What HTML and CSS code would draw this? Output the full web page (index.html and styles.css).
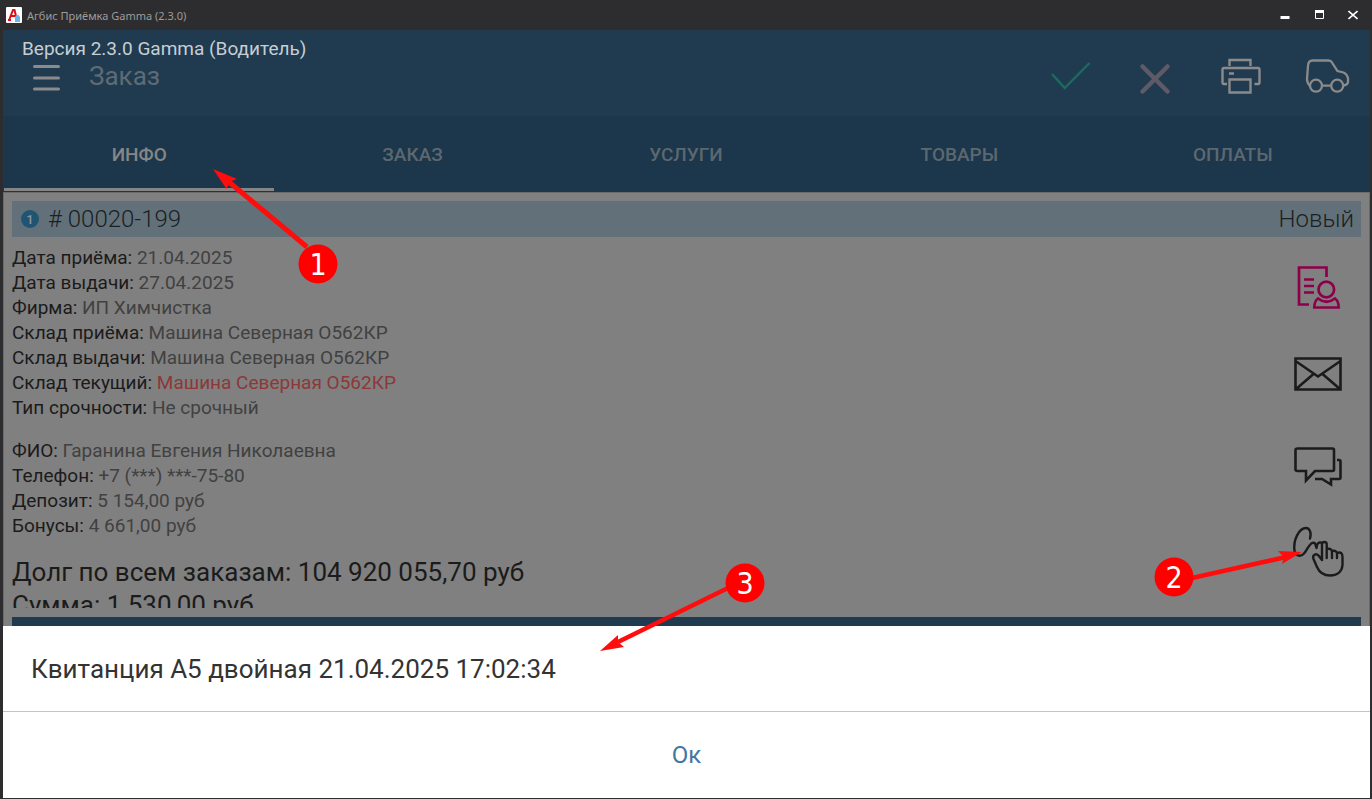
FILE: index.html
```html
<!DOCTYPE html>
<html lang="ru">
<head>
<meta charset="utf-8">
<title>Агбис Приёмка Gamma (2.3.0)</title>
<link rel="stylesheet" href="styles.css">
</head>
<body>
<div class="window">
  <div class="titlebar">
    <svg class="app-icon" width="16" height="16" viewBox="0 0 16 16" aria-hidden="true">
      <rect width="16" height="16" rx="1" fill="#fff"/>
      <path d="M2 13h3M9 13h2M3.500 12L7 3h1.500l2 8M5 9h5" fill="none" stroke="#e00b12" stroke-width="2"/>
      <path d="M9 15V10l1.500-2h2L14 10v5z" fill="#6bb5ef"/>
    </svg>
    <span class="app-name">Агбис Приёмка Gamma (2.3.0)</span>
    <div class="window-controls">
      <button class="window-button" type="button" aria-label="Свернуть"><svg width="10" height="10" viewBox="0 0 10 10"><path d="M0.500 7.500h9" stroke="#fff" stroke-width="3"/></svg></button>
      <button class="window-button" type="button" aria-label="Развернуть"><svg width="10" height="10" viewBox="0 0 10 10"><path d="M1.500 1v7.500h8V1" fill="none" stroke="#fff"/><path d="M1 1.500h9" stroke="#fff" stroke-width="3"/></svg></button>
      <button class="window-button" type="button" aria-label="Закрыть"><svg width="10" height="10" viewBox="0 0 10 10"><path d="M.5 1l9 8M9.500 1l-9 8" stroke="#fff" stroke-width="1.600"/></svg></button>
    </div>
  </div>

  <header class="header">
    <p class="version">Версия 2.3.0 Gamma (Водитель)</p>
    <div class="toolbar">
      <button class="menu-button" type="button" aria-label="Меню"><svg width="28" height="28" viewBox="0 0 28 28"><path d="M2.500 2.500h24M2.500 14h24M2.500 25h24" stroke="#8b8b8b" stroke-width="3" stroke-linecap="round"/></svg></button>
      <h1 class="page-title">Заказ</h1>
      <button class="tool-button" type="button" aria-label="Сохранить"><svg width="48" height="40" viewBox="0 0 48 40"><path d="M7 16l12.700 14L44.500 5" stroke="#1d6a5e" stroke-width="2.400"/></svg></button>
      <button class="tool-button" type="button" aria-label="Отменить"><svg width="48" height="40" viewBox="0 0 48 40"><path d="M11.500 8.500l25 25M36.500 8.500l-25 25" stroke="#5f5a67" stroke-width="4.500" stroke-linecap="round"/></svg></button>
      <button class="tool-button" type="button" aria-label="Печать"><svg width="48" height="40" viewBox="0 0 48 40"><path d="M12.500 8V2h21v6M10 26H7q-1.500 0-1.500-1.500v-13Q5.500 10 7 10h34q1.500 0 1.500 1.500v13Q42.500 26 41 26h-3.500M12.500 21.500h21v13h-21zM12 15.500h5" stroke="#8b8b8b" stroke-width="2.400"/></svg></button>
      <button class="tool-button" type="button" aria-label="Доставка"><svg width="48" height="40" viewBox="0 0 48 40"><g stroke="#8b8b8b" stroke-width="2.300"><circle cx="13" cy="27.700" r="6"/><circle cx="34.200" cy="27.700" r="6"/><path d="M7 28q-3-3-3-7L5 8Q5.200 2.500 9.500 2.500H25.500Q28 2.500 29 4.500L34.500 13 40.500 14.500Q44 16 45 20V24Q44.500 27 40.200 27.700M19 27.700h9.200"/></g></svg></button>
    </div>
  </header>

  <nav class="tabs">
    <button class="tab tab-active" type="button">ИНФО</button>
    <button class="tab" type="button">ЗАКАЗ</button>
    <button class="tab" type="button">УСЛУГИ</button>
    <button class="tab" type="button">ТОВАРЫ</button>
    <button class="tab" type="button">ОПЛАТЫ</button>
  </nav>

  <main class="content">
    <div class="order-bar">
      <span class="order-count">1</span>
      <span class="order-number"># 00020-199</span>
      <span class="order-status">Новый</span>
    </div>
    <div class="details">
      <div class="info">
        <section class="group">
          <p>Дата приёма: <span class="value">21.04.2025</span></p>
          <p>Дата выдачи: <span class="value">27.04.2025</span></p>
          <p>Фирма: <span class="value">ИП Химчистка</span></p>
          <p>Склад приёма: <span class="value">Машина Северная О562КР</span></p>
          <p>Склад выдачи: <span class="value">Машина Северная О562КР</span></p>
          <p>Склад текущий: <span class="value value-alert">Машина Северная О562КР</span></p>
          <p>Тип срочности: <span class="value">Не срочный</span></p>
        </section>
        <section class="group">
          <p>ФИО: <span class="value">Гаранина Евгения Николаевна</span></p>
          <p>Телефон: <span class="value">+7 (***) ***-75-80</span></p>
          <p>Депозит: <span class="value">5 154,00 руб</span></p>
          <p>Бонусы: <span class="value">4 661,00 руб</span></p>
        </section>
        <section class="totals">
          <p>Долг по всем заказам: 104 920 055,70 руб</p>
          <p>Сумма: 1 530,00 руб</p>
        </section>
      </div>
      <div class="side-actions">
        <button class="side-button" type="button" aria-label="Карточка клиента"><svg width="64" height="64" viewBox="0 0 64 64"><g stroke="#8d0049" stroke-width="2.700"><path d="M40.500 21V11.500H13V48.500H23M18 23.500h10M18 30h10M18 36.500h10"/><circle cx="40.300" cy="33.500" r="7.800"/><path d="M32 42.500Q28.300 45 28.300 51.500H52.700Q52.700 45 49 42.500Q40.500 49 32 42.500z"/></g></svg></button>
        <button class="side-button" type="button" aria-label="Письмо"><svg width="64" height="64" viewBox="0 0 64 64"><path d="M9.500 14.500h45v31h-45zM9.500 17L32 32.500 54.500 17M27.500 30L9.500 45.500M36.500 30l18 15.500" stroke="#1b1b1b" stroke-width="2.600"/></svg></button>
        <button class="side-button" type="button" aria-label="Сообщения"><svg width="64" height="64" viewBox="0 0 64 64"><path d="M11.500 16.500h35q1.500 0 1.500 1.500v19.500q0 1.500-1.500 1.500H29L20 48.500V39h-8.500q-2 0-2-1.500V18Q9.500 16.500 11.500 16.500zM51 28h2q1.500 0 1.500 1.500v16q0 1.500-1.500 1.500h-8v5.500L36 47h-7" stroke="#1b1b1b" stroke-width="2.600"/></svg></button>
        <button class="side-button" type="button" aria-label="Подпись"><svg width="64" height="64" viewBox="0 0 64 64"><path d="M24 18.500C26 12 23 8 20 8C13 8 7 20 8.500 31C9 35 14 38 18 33.500C21 30 23 24 26.500 22.800C30 22 29.500 26 30.500 28C31 24 32 22 34.500 22.500M36 40V24Q36 22 38.300 22T40.700 24V38M40.700 29Q46 28 46 32V38M46 31Q51 30 51 34V38M51 33Q56.500 31 56.500 37V45C56 52 51 55.500 44 55.500C36 55.500 33 51.500 31 47L27.500 39C26 35 30 33 32.500 35.500L36 40" stroke="#1b1b1b" stroke-width="2.400" stroke-linecap="round" stroke-linejoin="round"/></svg></button>
      </div>
    </div>
    <div class="bottom-bar"></div>
  </main>

  <div class="sheet" role="dialog" aria-label="Выбор документа">
    <button class="sheet-item" type="button">Квитанция А5 двойная 21.04.2025 17:02:34</button>
    <button class="sheet-ok" type="button">Ок</button>
  </div>

  <svg class="callout callout-1" width="130" height="120" viewBox="0 0 130 120">
    <path d="M19 17L97 82" stroke="#ff0d0d" stroke-width="5"/><path d="M3 4L27 14L20.500 16.500L16.500 24z" fill="#ff0d0d"/>
    <circle cx="108" cy="99" r="19.500" fill="#f00"/><text x="108" y="110">1</text>
  </svg>
  <svg class="callout callout-2" width="160" height="60" viewBox="0 0 160 60">
    <path d="M40 38L134 17" stroke="#ff0d0d" stroke-width="4.500"/><path d="M150 12L126 11L132 17L130 24z" fill="#ff0d0d"/>
    <circle cx="22" cy="37" r="19.500" fill="#f00"/><text x="22" y="48">2</text>
  </svg>
  <svg class="callout callout-3" width="170" height="100" viewBox="0 0 170 100">
    <path d="M128 28L18 82" stroke="#ff0d0d" stroke-width="4.500"/><path d="M0 91L18 75L18 82L24 87z" fill="#ff0d0d"/>
    <circle cx="145" cy="23" r="19.500" fill="#f00"/><text x="145" y="34">3</text>
  </svg>
</div>
</body>
</html>
```
FILE: styles.css
```css
* { box-sizing: border-box; }
body { margin: 0; background: #2d2d30; font-family: Roboto, "Liberation Sans", sans-serif; }
p, h1 { margin: 0; }
button { margin: 0; padding: 0; border: 0; background: none; color: inherit; font: inherit; cursor: pointer; }
svg { display: block; fill: none; }

.window { position: relative; display: flex; flex-direction: column; height: 100vh; padding: 0 2px 1px 3px; overflow: hidden; }

.titlebar { display: flex; align-items: center; flex: none; height: 30px; padding-left: 3px; gap: 5px; color: #9c9c9c; font-family: "Noto Sans", sans-serif; font-size: 11px; }
.app-name { flex: 1; }
.window-controls { display: flex; }
.window-button { display: grid; place-items: center; width: 34px; height: 30px; }

.header { flex: none; height: 86px; padding-top: 6px; background: #203b50; }
.version { padding-left: 19px; height: 22px; color: #c7ced3; font-size: 19px; line-height: 26px; }
.toolbar { display: flex; align-items: center; height: 40px; }
.menu-button { margin-left: 29px; }
.page-title { flex: 1; padding: 0 0 4px 29px; color: #5e6b75; font-size: 26px; font-weight: 400; line-height: 36px; }
.tool-button { display: grid; place-items: center; width: 86px; height: 40px; }

.tabs { display: grid; grid-template-columns: repeat(5, 1fr); flex: none; height: 76px; padding-bottom: 1px; background: #1c364b; color: #5c6870; font-size: 19px; font-weight: 500; }
.tab { margin: 0 2px 0 1px; padding-top: 2px; border-top: 3px solid transparent; border-bottom: 3px solid transparent; }
.tab-active { border-bottom-color: #858585; color: #868686; }

.content { display: flex; flex: 1; flex-direction: column; min-height: 0; padding: 8px 8px 0; border: 1px solid #6b6b6b; border-bottom: 0; background: #808080; color: #1b1b1b; }
.order-bar { display: flex; align-items: center; flex: none; height: 36px; padding: 0 7px 0 9px; background: #627179; color: #1c2022; font-size: 24px; font-weight: 300; }
.order-count { display: grid; place-items: center; width: 18px; height: 18px; margin-right: 9px; border-radius: 50%; background: #1f5473; color: #8a949a; font-size: 13px; font-weight: 500; }
.order-number { flex: 1; }

.details { display: flex; flex: 1; min-height: 0; margin-bottom: 9px; overflow: hidden; }
.info { flex: 1; padding-top: 8px; font-size: 19px; line-height: 25px; }
.group { margin-bottom: 18px; }
.value { color: #414141; }
.value-alert { color: #8c3838; }
.totals { font-size: 26px; line-height: 33px; }
.side-actions { display: flex; flex-direction: column; gap: 24px; padding: 19px 11px 0 0; }
.bottom-bar { flex: none; height: 9px; background: #203b50; }

.sheet { display: flex; flex: none; flex-direction: column; background: #fff; }
.sheet-item { height: 86px; padding-left: 28px; border-bottom: 1px solid #b9c7d1; color: #333; font-size: 26px; text-align: left; }
.sheet-ok { height: 86px; color: #3f78a3; font-size: 24px; }

.callout { position: absolute; pointer-events: none; }
.callout text { fill: #fff; font-family: "DejaVu Sans Condensed", "DejaVu Sans", sans-serif; font-size: 30px; text-anchor: middle; }
.callout-1 { left: 210px; top: 165px; }
.callout-2 { right: 60px; top: 540px; }
.callout-3 { left: 600px; top: 560px; }
```
